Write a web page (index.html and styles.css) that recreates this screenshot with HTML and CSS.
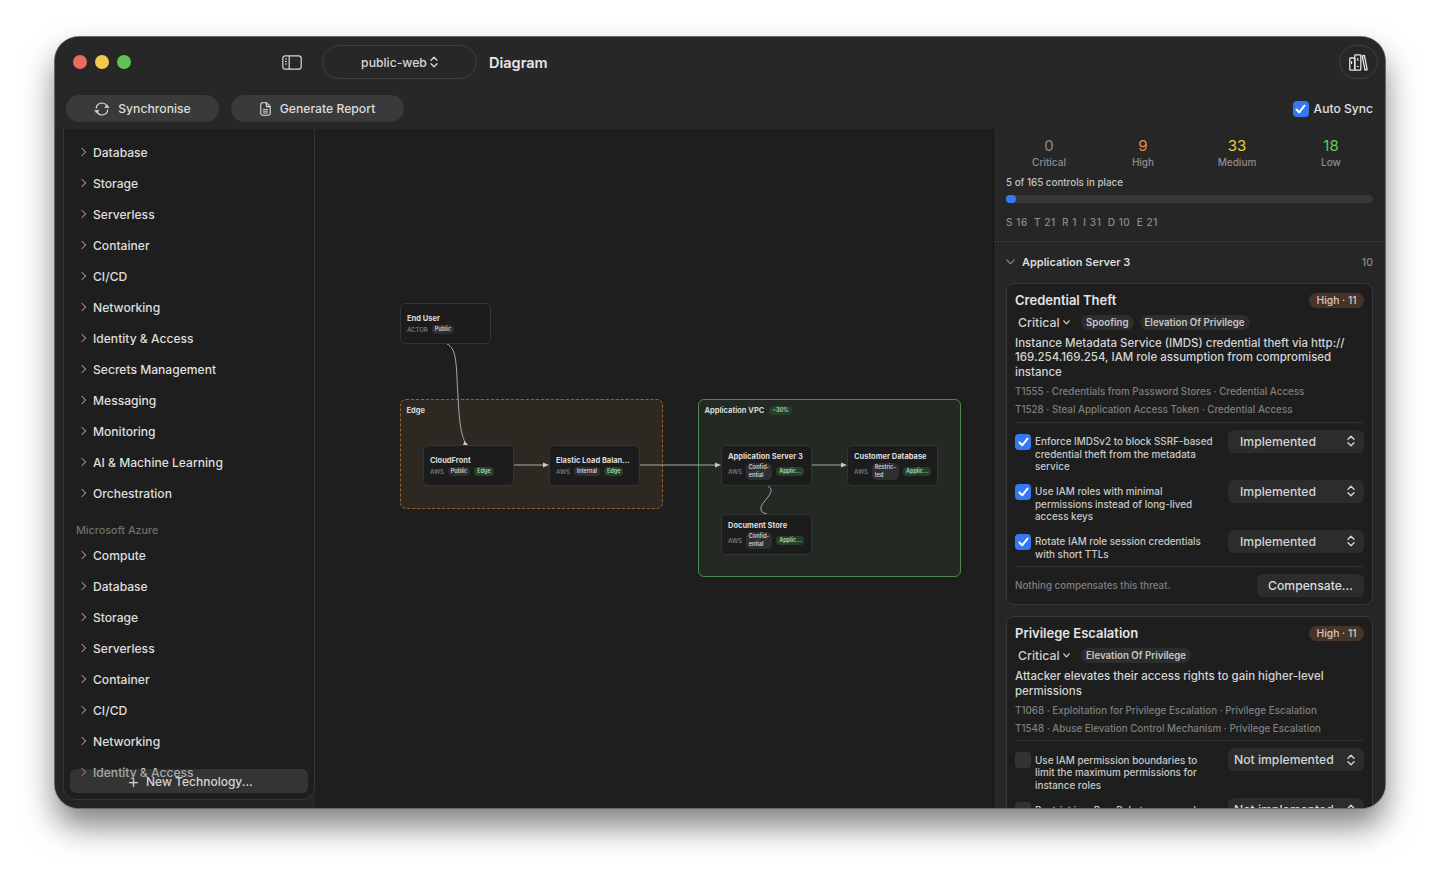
FILE: index.html
```html
<!DOCTYPE html>
<html lang="en">
<head>
    <meta charset="UTF-8">
    <title>Diagram - public-web</title>
    <link rel="stylesheet" href="styles.css">
</head>
<body>
    <div class="window">
        <!-- Title bar -->
        <header class="titlebar">
            <div class="title-row">
                <div class="lights">
                    <span class="light light-red"></span>
                    <span class="light light-yellow"></span>
                    <span class="light light-green"></span>
                </div>
                <svg class="sidebar-toggle" width="20" height="15" viewBox="0 0 20 15" fill="none" stroke="#d8d8d8" stroke-width="1.2">
                    <rect x="0.8" y="0.8" width="18.4" height="13.4" rx="2.5"/>
                    <path d="M7.2 0.8V14.2"/>
                    <path d="M3 4H5M3 6.5H5M3 9H5" stroke-width="1"/>
                </svg>
                <div class="scheme-pill">
                    <span>public-web</span>
                    <svg width="8" height="12" viewBox="0 0 8 12" fill="none" stroke="#d8d8d8" stroke-width="1.3" stroke-linecap="round" stroke-linejoin="round"><path d="M1 4.2L4 1.2L7 4.2M1 7.8L4 10.8L7 7.8"/></svg>
                </div>
                <h1 class="page-title">Diagram</h1>
                <button class="library-btn">
                    <svg width="19" height="17" viewBox="0 0 19 17" fill="none" stroke="#e8e8e8" stroke-width="1.3" stroke-linejoin="round">
                        <rect x="0.8" y="4" width="5" height="12.2" rx="0.8"/>
                        <rect x="5.8" y="0.8" width="6" height="15.4" rx="0.8"/>
                        <path d="M13.2 2L15.4 1.5L18.2 15.6L16 16.2Z"/>
                        <path d="M2.6 7V10M7.8 12.5H9.8M8.8 4V7" stroke-width="1.1"/>
                    </svg>
                </button>
            </div>
            <div class="tool-row">
                <button class="tool-btn sync-btn">
                    <svg width="16" height="14" viewBox="0 0 16 14" fill="none" stroke="#e0e0e0" stroke-width="1.2" stroke-linecap="round" stroke-linejoin="round">
                        <path d="M2.2 6A5.8 5.8 0 0 1 12.6 3.4"/>
                        <path d="M13.8 8A5.8 5.8 0 0 1 3.4 10.6"/>
                        <path d="M11 5.6H15L13.2 3.2Z" fill="#e0e0e0" stroke-width="0.6"/>
                        <path d="M1 8.4H5L2.8 10.8Z" fill="#e0e0e0" stroke-width="0.6"/>
                    </svg>
                    Synchronise
                </button>
                <button class="tool-btn report-btn">
                    <svg width="11" height="14" viewBox="0 0 11 14" fill="none" stroke="#e0e0e0" stroke-width="1.1" stroke-linejoin="round">
                        <path d="M1.8 0.8H6.6L10.2 4.4V11.6A1.6 1.6 0 0 1 8.6 13.2H2.4A1.6 1.6 0 0 1 0.8 11.6V1.8Z"/>
                        <path d="M6.4 0.8V4.6H10.2"/>
                        <path d="M3 7.4H8M3 9.2H8M3 11H8" stroke-width="0.9"/>
                    </svg>
                    Generate Report
                </button>
                <label class="auto-sync">
                    <span class="check on">
                        <svg width="11" height="10" viewBox="0 0 11 10" fill="none" stroke="#fff" stroke-width="2" stroke-linecap="round" stroke-linejoin="round"><path d="M1.5 5.5L4.2 8.3L9.5 1.6"/></svg>
                    </span>
                    Auto Sync
                </label>
            </div>
        </header>

        <div class="main">
            <!-- Technology list -->
            <aside class="side">
                <div class="side-panel">
                    <ul class="tech-list">
                        <li>Database</li>
                        <li>Storage</li>
                        <li>Serverless</li>
                        <li>Container</li>
                        <li>CI/CD</li>
                        <li>Networking</li>
                        <li>Identity &amp; Access</li>
                        <li>Secrets Management</li>
                        <li>Messaging</li>
                        <li>Monitoring</li>
                        <li>AI &amp; Machine Learning</li>
                        <li>Orchestration</li>
                    </ul>
                    <div class="tech-heading">Microsoft Azure</div>
                    <ul class="tech-list">
                        <li>Compute</li>
                        <li>Database</li>
                        <li>Storage</li>
                        <li>Serverless</li>
                        <li>Container</li>
                        <li>CI/CD</li>
                        <li>Networking</li>
                        <li>Identity &amp; Access</li>
                        <li>Secrets Management</li>
                    </ul>
                    <button class="new-tech"><span class="plus">+</span>New Technology...</button>
                </div>
            </aside>

            <!-- Diagram canvas -->
            <section class="canvas">
                <div class="group group-edge"><span class="group-label">Edge</span></div>
                <div class="group group-vpc"><span class="group-label">Application VPC</span><span class="chip green vpc-chip">~30%</span></div>

                <svg class="edges" width="678" height="679" viewBox="315 129 678 679" fill="none" stroke="#a8a8a8" stroke-width="1">
                    <path d="M447 344C458 348 456 372 458 395C459 420 461 436 466 444"/>
                    <path d="M514 465H544"/>
                    <path d="M640 465H716"/>
                    <path d="M812 465H842"/>
                    <path d="M768 486C773 489 771 493 768 497C764 502 760 506 761 510C762 513 764 513 767 514"/>
                    <path d="M549 465L543 462.5V467.5Z" fill="#c8c8c8" stroke="none"/>
                    <path d="M721 465L715 462.5V467.5Z" fill="#c8c8c8" stroke="none"/>
                    <path d="M847 465L841 462.5V467.5Z" fill="#c8c8c8" stroke="none"/>
                    <path d="M468 445L463 445L464.5 441Z" fill="#c8c8c8" stroke="none"/>
                </svg>

                <div class="node node-user">
                    <div class="node-title">End User</div>
                    <div class="node-meta"><span>ACTOR</span><span class="chip">Public</span></div>
                </div>
                <div class="node node-front">
                    <div class="node-title">CloudFront</div>
                    <div class="node-meta"><span>AWS</span><span class="chip">Public</span><span class="chip green">Edge</span></div>
                </div>
                <div class="node node-elb">
                    <div class="node-title">Elastic Load Balan...</div>
                    <div class="node-meta"><span>AWS</span><span class="chip">Internal</span><span class="chip green">Edge</span></div>
                </div>
                <div class="node node-app">
                    <div class="node-title">Application Server 3</div>
                    <div class="node-meta"><span>AWS</span><span class="chip wrap">Confid-<br>ential</span><span class="chip green">Applic...</span></div>
                </div>
                <div class="node node-db">
                    <div class="node-title">Customer Database</div>
                    <div class="node-meta"><span>AWS</span><span class="chip wrap">Restric-<br>ted</span><span class="chip green">Applic...</span></div>
                </div>
                <div class="node node-doc">
                    <div class="node-title">Document Store</div>
                    <div class="node-meta"><span>AWS</span><span class="chip wrap">Confid-<br>ential</span><span class="chip green">Applic...</span></div>
                </div>
            </section>

            <!-- Threat inspector -->
            <aside class="inspector">
                <div class="stats">
                    <div class="stat"><div class="stat-num num-grey">0</div><div class="stat-label">Critical</div></div>
                    <div class="stat"><div class="stat-num num-orange">9</div><div class="stat-label">High</div></div>
                    <div class="stat"><div class="stat-num num-yellow">33</div><div class="stat-label">Medium</div></div>
                    <div class="stat"><div class="stat-num num-green">18</div><div class="stat-label">Low</div></div>
                </div>
                <div class="controls-count">5 of 165 controls in place</div>
                <div class="progress"><div class="progress-fill"></div></div>
                <div class="stride">
                    <span>S 16</span><span>T 21</span><span>R 1</span><span>I 31</span><span>D 10</span><span>E 21</span>
                </div>

                <div class="section-head">
                    <svg width="9" height="6" viewBox="0 0 9 6" fill="none" stroke="#8c8c8c" stroke-width="1.1" stroke-linecap="round" stroke-linejoin="round"><path d="M0.8 0.8L4.5 4.8L8.2 0.8"/></svg>
                    <span class="section-title">Application Server 3</span>
                    <span class="section-count">10</span>
                </div>

                <article class="card">
                    <div class="card-head">
                        <h2>Credential Theft</h2>
                        <span class="risk">High · 11</span>
                    </div>
                    <div class="tag-row">
                        <span class="severity">Critical
                            <svg width="7" height="5" viewBox="0 0 7 5" fill="none" stroke="#d8d8d8" stroke-width="1.2" stroke-linecap="round" stroke-linejoin="round"><path d="M0.8 0.8L3.5 3.8L6.2 0.8"/></svg>
                        </span>
                        <span class="tag">Spoofing</span>
                        <span class="tag">Elevation Of Privilege</span>
                    </div>
                    <p class="desc">Instance Metadata Service (IMDS) credential theft via http://<br>169.254.169.254, IAM role assumption from compromised instance</p>
                    <p class="attack">T1555 · Credentials from Password Stores · Credential Access</p>
                    <p class="attack">T1528 · Steal Application Access Token · Credential Access</p>
                    <div class="rule"></div>
                    <div class="control">
                        <span class="check on"><svg width="11" height="10" viewBox="0 0 11 10" fill="none" stroke="#fff" stroke-width="2" stroke-linecap="round" stroke-linejoin="round"><path d="M1.5 5.5L4.2 8.3L9.5 1.6"/></svg></span>
                        <span class="control-text">Enforce IMDSv2 to block SSRF-based credential theft from the metadata service</span>
                        <span class="status">Implemented<svg width="8" height="12" viewBox="0 0 8 12" fill="none" stroke="#d8d8d8" stroke-width="1.3" stroke-linecap="round" stroke-linejoin="round"><path d="M1 4.2L4 1.2L7 4.2M1 7.8L4 10.8L7 7.8"/></svg></span>
                    </div>
                    <div class="control">
                        <span class="check on"><svg width="11" height="10" viewBox="0 0 11 10" fill="none" stroke="#fff" stroke-width="2" stroke-linecap="round" stroke-linejoin="round"><path d="M1.5 5.5L4.2 8.3L9.5 1.6"/></svg></span>
                        <span class="control-text">Use IAM roles with minimal permissions instead of long-lived access keys</span>
                        <span class="status">Implemented<svg width="8" height="12" viewBox="0 0 8 12" fill="none" stroke="#d8d8d8" stroke-width="1.3" stroke-linecap="round" stroke-linejoin="round"><path d="M1 4.2L4 1.2L7 4.2M1 7.8L4 10.8L7 7.8"/></svg></span>
                    </div>
                    <div class="control control-short">
                        <span class="check on"><svg width="11" height="10" viewBox="0 0 11 10" fill="none" stroke="#fff" stroke-width="2" stroke-linecap="round" stroke-linejoin="round"><path d="M1.5 5.5L4.2 8.3L9.5 1.6"/></svg></span>
                        <span class="control-text">Rotate IAM role session credentials with short TTLs</span>
                        <span class="status">Implemented<svg width="8" height="12" viewBox="0 0 8 12" fill="none" stroke="#d8d8d8" stroke-width="1.3" stroke-linecap="round" stroke-linejoin="round"><path d="M1 4.2L4 1.2L7 4.2M1 7.8L4 10.8L7 7.8"/></svg></span>
                    </div>
                    <div class="rule"></div>
                    <div class="card-foot">
                        <span class="foot-note">Nothing compensates this threat.</span>
                        <button class="compensate">Compensate...</button>
                    </div>
                </article>

                <article class="card">
                    <div class="card-head">
                        <h2>Privilege Escalation</h2>
                        <span class="risk">High · 11</span>
                    </div>
                    <div class="tag-row">
                        <span class="severity">Critical
                            <svg width="7" height="5" viewBox="0 0 7 5" fill="none" stroke="#d8d8d8" stroke-width="1.2" stroke-linecap="round" stroke-linejoin="round"><path d="M0.8 0.8L3.5 3.8L6.2 0.8"/></svg>
                        </span>
                        <span class="tag">Elevation Of Privilege</span>
                    </div>
                    <p class="desc">Attacker elevates their access rights to gain higher-level permissions</p>
                    <p class="attack">T1068 · Exploitation for Privilege Escalation · Privilege Escalation</p>
                    <p class="attack">T1548 · Abuse Elevation Control Mechanism · Privilege Escalation</p>
                    <div class="rule"></div>
                    <div class="control">
                        <span class="check"></span>
                        <span class="control-text">Use IAM permission boundaries to limit the maximum permissions for instance roles</span>
                        <span class="status status-off">Not implemented<svg width="8" height="12" viewBox="0 0 8 12" fill="none" stroke="#d8d8d8" stroke-width="1.3" stroke-linecap="round" stroke-linejoin="round"><path d="M1 4.2L4 1.2L7 4.2M1 7.8L4 10.8L7 7.8"/></svg></span>
                    </div>
                    <div class="control">
                        <span class="check"></span>
                        <span class="control-text">Restrict iam:PassRole to approved roles and services only</span>
                        <span class="status status-off">Not implemented<svg width="8" height="12" viewBox="0 0 8 12" fill="none" stroke="#d8d8d8" stroke-width="1.3" stroke-linecap="round" stroke-linejoin="round"><path d="M1 4.2L4 1.2L7 4.2M1 7.8L4 10.8L7 7.8"/></svg></span>
                    </div>
                </article>
            </aside>
        </div>
    </div>
</body>
</html>
```

FILE: styles.css
```css
/* General */
* {
    box-sizing: border-box;
}

html,
body {
    height: 100%;
}

body {
    margin: 0;
    padding: 37px 55px 0;
    overflow: hidden;
    background: #fff;
    font-family: Inter, "Noto Sans", sans-serif;
    font-weight: 500;
    color: #e2e2e2;
}

button {
    font-family: inherit;
    font-weight: inherit;
    border: none;
    padding: 0;
}

p,
h1,
h2,
ul {
    margin: 0;
    padding: 0;
}

ul {
    list-style: none;
}

/* Window */
.window {
    width: 1330px;
    height: 771px;
    display: flex;
    flex-direction: column;
    background: #262626;
    border-radius: 24px;
    overflow: hidden;
    box-shadow: 0 0 0 1px #6a6a6a, 0 18px 32px rgba(0, 0, 0, 0.5);
}

/* Title bar */
.titlebar {
    height: 92px;
    flex: none;
    background: #272727;
}

.title-row {
    height: 50px;
    padding: 0 7px 0 18px;
    display: flex;
    align-items: center;
}

.lights {
    display: flex;
    gap: 8px;
}

.light {
    width: 14px;
    height: 14px;
    border-radius: 50%;
}

.light-red { background: #ed6a5e; }
.light-yellow { background: #f4c84a; }
.light-green { background: #5fc454; }

.sidebar-toggle {
    margin-left: 151px;
}

.scheme-pill {
    width: 155px;
    height: 34px;
    margin-left: 20px;
    display: flex;
    align-items: center;
    justify-content: center;
    gap: 3px;
    border: 1px solid #3f3f3f;
    border-radius: 17px;
    font-size: 12.2px;
    color: #d8d8d8;
}

.page-title {
    margin-left: 12px;
    font-size: 14.5px;
    font-weight: 600;
    color: #e6e6e6;
}

.library-btn {
    margin-left: auto;
    width: 39px;
    height: 34px;
    display: flex;
    align-items: center;
    justify-content: center;
    background: transparent;
    border: 1px solid #3f3f3f;
    border-radius: 17px;
}

.tool-row {
    height: 42px;
    padding: 8px 12px 7px 11px;
    display: flex;
    align-items: center;
}

.tool-btn {
    height: 27px;
    display: flex;
    align-items: center;
    justify-content: center;
    gap: 8px;
    background: #3a3a3a;
    border-radius: 14px;
    font-size: 12.2px;
    color: #dcdcdc;
}

.sync-btn {
    width: 153px;
}

.report-btn {
    width: 173px;
    margin-left: 12px;
    gap: 9px;
}

.auto-sync {
    margin-left: auto;
    display: flex;
    align-items: center;
    gap: 5px;
    font-size: 12.1px;
    color: #e2e2e2;
}

/* Checkbox */
.check {
    width: 16px;
    height: 16px;
    flex: none;
    display: flex;
    align-items: center;
    justify-content: center;
    background: #333;
    border-radius: 4px;
}

.check.on {
    background: #3478f6;
}

/* Main area */
.main {
    flex: 1;
    min-height: 0;
    display: flex;
}

/* Technology list */
.side {
    width: 260px;
    flex: none;
    padding: 0 0 8px 8px;
    background: #242424;
}

.side-panel {
    position: relative;
    height: 100%;
    padding-top: 8px;
    overflow: hidden;
    background: #1e1e1e;
    border: 1px solid #353535;
    border-top: none;
    border-radius: 0 0 13px 13px;
}

.tech-list li {
    position: relative;
    height: 31px;
    padding-left: 29px;
    line-height: 31px;
    font-size: 12.1px;
    color: #dedede;
}

/* chevron in front of every row */
.tech-list li::before {
    content: "";
    position: absolute;
    left: 15px;
    top: 12px;
    width: 5px;
    height: 5px;
    border-top: 1px solid #8e8e8e;
    border-right: 1px solid #8e8e8e;
    transform: rotate(45deg);
}

.tech-heading {
    height: 31px;
    padding: 15px 0 0 12px;
    font-size: 10.8px;
    line-height: 13px;
    color: #6f6f6f;
}

.new-tech {
    position: absolute;
    left: 6px;
    right: 6px;
    bottom: 6px;
    height: 24px;
    background: rgba(85, 85, 85, 0.4);
    border-radius: 6px;
    font-size: 12px;
    color: #d4d4d4;
    display: flex;
    align-items: center;
    padding-left: 51px;
}

.plus {
    width: 25px;
    font-size: 19px;
    font-weight: 300;
    line-height: 1;
}

/* Diagram canvas */
.canvas {
    position: relative;
    flex: 1;
    background: #1e1e1e;
}

.edges {
    position: absolute;
    left: 0;
    top: 0;
}

.group {
    position: absolute;
    top: 270px;
    width: 263px;
    border-radius: 6px;
    padding: 5px 5.5px;
    display: flex;
    align-items: flex-start;
    line-height: 11px;
}

.group-edge {
    left: 85px;
    height: 110px;
    background: #2e2822;
    border: 1.5px dashed #9c622c;
}

.group-vpc {
    left: 383px;
    height: 178px;
    background: #232a24;
    border: 1.5px solid #4b8a4e;
}

.group-label {
    font-size: 7.5px;
    font-weight: 700;
    color: #d8d8d8;
}

.vpc-chip {
    margin-left: 5px;
    margin-top: 1px;
}

.node {
    position: absolute;
    width: 91px;
    height: 41px;
    padding: 1px 6px 0;
    display: flex;
    flex-direction: column;
    justify-content: center;
    gap: 2px;
    background: #1c1c1c;
    border: 1px solid #343434;
    border-radius: 5px;
}

.node-user { left: 85px; top: 174px; }
.node-front { left: 108px; top: 316px; }
.node-elb { left: 234px; top: 316px; }
.node-app { left: 406px; top: 316px; }
.node-db { left: 532px; top: 316px; }
.node-doc { left: 406px; top: 385px; }

.node-title {
    font-size: 7.5px;
    font-weight: 700;
    color: #dcdcdc;
    white-space: nowrap;
}

.node-meta {
    display: flex;
    align-items: center;
    gap: 4px;
    font-size: 6px;
    color: #858585;
}

.chip {
    display: inline-block;
    padding: 1px 3px;
    background: #2f2f2f;
    border-radius: 4px;
    font-size: 5.5px;
    font-weight: 600;
    line-height: 6.5px;
    color: #cfcfcf;
}

.chip.green {
    background: #24402a;
    color: #b9d8bc;
}

.chip.wrap {
    padding: 1px 3px;
    border-radius: 5px;
    line-height: 7.5px;
}

/* Threat inspector */
.inspector {
    width: 392px;
    flex: none;
    overflow: hidden;
    padding: 0 12px;
    background: #262626;
    border-left: 1px solid #111;
}

.stats {
    display: grid;
    grid-template-columns: repeat(4, 94px);
    margin: 8px -8px 0 -4px;
    text-align: center;
}

.stat-num {
    font-size: 15px;
    line-height: 18px;
    font-weight: 400;
}

.num-grey { color: #8d8d8d; }
.num-orange { color: #e48f3d; }
.num-yellow { color: #f2c83f; }
.num-green { color: #5fce5a; }

.stat-label {
    font-size: 10px;
    line-height: 14px;
    color: #8d8d8d;
}

.controls-count {
    margin-top: 7px;
    font-size: 9.8px;
    line-height: 14px;
    color: #c4c4c4;
}

.progress {
    height: 8px;
    margin-top: 5px;
    background: #373737;
    border-radius: 4px;
}

.progress-fill {
    width: 10px;
    height: 8px;
    background: #3478f6;
    border-radius: 4px;
}

.stride {
    display: flex;
    gap: 6.3px;
    margin-top: 12px;
    font-size: 10px;
    line-height: 14px;
    letter-spacing: 0.55px;
    color: #8a8a8a;
}

.section-head {
    height: 42px;
    margin: 12px -12px 0;
    padding: 0 12px 1px;
    display: flex;
    align-items: center;
    border-top: 1px solid #343434;
}

.section-title {
    margin-left: 7px;
    font-size: 11px;
    font-weight: 600;
    color: #dcdcdc;
}

.section-count {
    margin-left: auto;
    font-size: 10.5px;
    color: #8a8a8a;
}

/* Threat card */
.card {
    margin-bottom: 11px;
    padding: 8px 8px 7px;
    background: #1e1e1e;
    border: 1px solid #383838;
    border-radius: 8px;
}

.card-head {
    display: flex;
    align-items: center;
    justify-content: space-between;
}

.card-head h2 {
    font-size: 13px;
    font-weight: 600;
    line-height: 16px;
    color: #e4e4e4;
}

.risk {
    width: 55px;
    height: 15px;
    display: flex;
    align-items: center;
    justify-content: center;
    background: #46342a;
    border-radius: 8px;
    font-size: 10.3px;
    color: #d8c8bc;
}

.tag-row {
    height: 15px;
    margin-top: 7px;
    display: flex;
    align-items: center;
    gap: 6px;
}

.severity {
    width: 60px;
    padding-left: 3px;
    display: flex;
    align-items: center;
    gap: 3px;
    font-size: 12.3px;
    color: #cfcfcf;
}

.tag {
    height: 15px;
    padding: 0 5px;
    display: flex;
    align-items: center;
    background: #2d2d2d;
    border-radius: 8px;
    font-size: 9.7px;
    font-weight: 600;
    color: #c8c8c8;
}

.desc {
    margin-top: 5.75px;
    font-size: 11.5px;
    line-height: 14.5px;
    color: #d4d4d4;
}

.attack {
    margin-top: 4px;
    font-size: 9.8px;
    line-height: 14px;
    color: #7f7f7f;
}

.desc + .attack {
    margin-top: 5.5px;
}

.rule {
    height: 1px;
    margin-top: 4.75px;
    background: #303030;
}

.control {
    display: flex;
    align-items: flex-start;
    height: 50px;
    padding-top: 7px;
}

.control-short {
    height: 39px;
}

.control .check {
    margin-top: 4px;
}

.control-text {
    width: 180px;
    margin-left: 4px;
    margin-top: 5.5px;
    font-size: 9.9px;
    line-height: 12.7px;
    color: #c8c8c8;
}

.status {
    width: 136px;
    height: 23px;
    margin-left: auto;
    padding: 0 9px 0 12px;
    display: flex;
    align-items: center;
    justify-content: space-between;
    background: #2c2c2c;
    border-radius: 6px;
    font-size: 12.2px;
    color: #d4d4d4;
}

.status-off {
    padding-left: 6px;
}

.card-foot {
    display: flex;
    align-items: center;
    justify-content: space-between;
    padding-top: 7px;
}

.foot-note {
    font-size: 9.8px;
    color: #7f7f7f;
}

.compensate {
    width: 107px;
    height: 23px;
    background: #2c2c2c;
    border-radius: 6px;
    font-size: 12.2px;
    color: #dcdcdc;
}
```
